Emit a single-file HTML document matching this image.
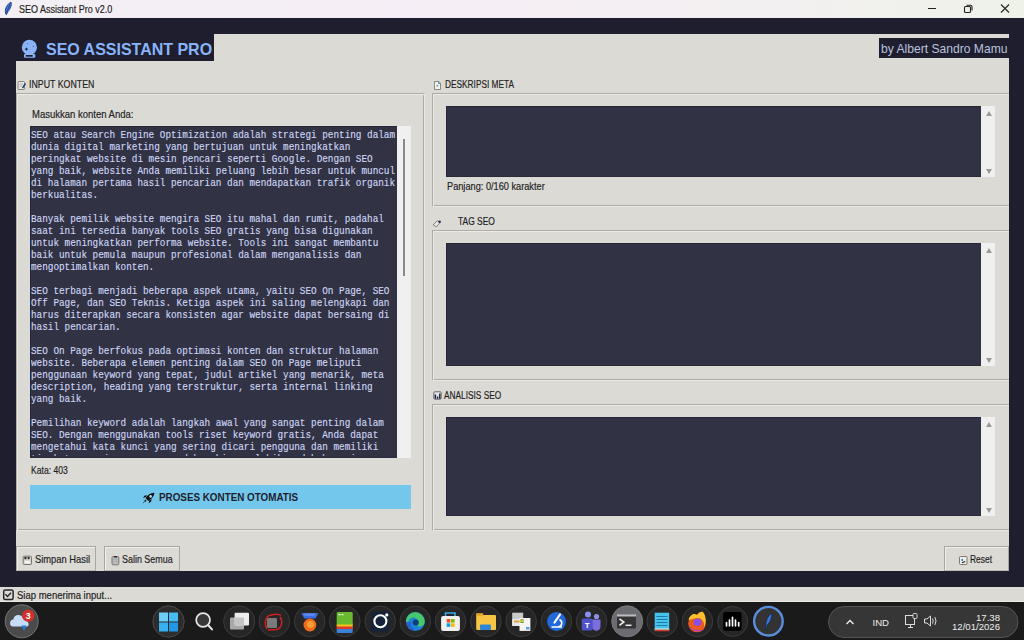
<!DOCTYPE html>
<html><head><meta charset="utf-8">
<style>
*{margin:0;padding:0;box-sizing:border-box}
html,body{width:1024px;height:640px;overflow:hidden;background:#1e1e2e;font-family:"Liberation Sans",sans-serif}
.a{position:absolute}
.t{position:absolute;white-space:pre;line-height:1;color:#1f1f1f;-webkit-text-stroke:0.18px currentColor;transform-origin:0 0}
#titlebar{left:0;top:0;width:1024px;height:18px;background:linear-gradient(90deg,#f3eff4 0%,#f6eef6 40%,#f3f0f1 75%,#eef2e8 100%)}
#main{left:16px;top:34px;width:993px;height:537px;background:#dcdad5}
.lf{position:absolute;border:1px solid #b0aca4;border-right-color:#eae9e5;border-bottom-color:#eae9e5;border-radius:1px;box-shadow:inset 1px 1px 0 #eceae6,inset -1px -1px 0 #b0aca4}
.dark{position:absolute;background:#313244;border-top:1px solid #262636;border-left:1px solid #262636;border-bottom:1px solid #2a2a3a}
.sb{position:absolute;background:#f0f0f0}
.arr{position:absolute;width:0;height:0;border-left:3.5px solid transparent;border-right:3.5px solid transparent}
.btn{position:absolute;background:#dcdad5;border:1px solid #aaa69e;border-bottom-color:#bdb9b1;box-shadow:inset 1px 1px 0 #f1f0ec}
#status{left:0;top:587px;width:1024px;height:15px;background:#dcdad5;border-bottom:1px solid #e9e8e4}
#taskbar{left:0;top:602px;width:1024px;height:38px;background:#1a1a1a}
.ic{position:absolute;width:31px;height:31px;border-radius:50%;background:#2a2a2a;border:1px solid #3c3c3c}
pre.code{position:absolute;font-family:"Liberation Mono",monospace;font-size:10px;line-height:12px;color:#cdd6f4;white-space:pre;transform:scaleX(0.9333);transform-origin:0 0;-webkit-text-stroke:0.15px currentColor}
</style></head><body>
<!-- title bar -->
<div id="titlebar" class="a"></div>
<svg class="a" style="left:0;top:0" width="18" height="18" viewBox="0 0 18 18"><path d="M10.9 2 C12.2 4.6 10.4 9 7.6 12 L6.3 14.8 L5.6 13.2 C4.6 10 6.2 5 10.9 2Z" fill="#3d7be0" stroke="#1b2d66" stroke-width="0.8"/><path d="M10 4.5 L6.5 12.5" stroke="#1b2d66" stroke-width="0.7"/></svg>
<div class="t" style="left:19.24px;top:5.00px;font-size:10.4px;transform:scaleX(0.8631);color:#222">SEO Assistant Pro v2.0</div>
<svg class="a" style="left:926px;top:2px" width="12" height="12"><line x1="2" y1="6.5" x2="10" y2="6.5" stroke="#222" stroke-width="1"/></svg>
<svg class="a" style="left:962px;top:2px" width="12" height="12"><rect x="2.5" y="4.5" width="6" height="6" rx="1" fill="none" stroke="#222" stroke-width="1.1"/><path d="M4.5 3.2 H8.5 A1.5 1.5 0 0 1 10 4.7 V8.5" fill="none" stroke="#222" stroke-width="1.1"/></svg>
<svg class="a" style="left:999px;top:2px" width="12" height="12"><path d="M2 2.5 L10 10.5 M10 2.5 L2 10.5" stroke="#222" stroke-width="1.1"/></svg>

<!-- main -->
<div id="main" class="a"></div>
<div class="a" style="left:16px;top:34px;width:198px;height:27px;background:#1e1e2e"></div>
<svg class="a" style="left:18px;top:36px" width="24" height="24" viewBox="0 0 24 24"><circle cx="11.4" cy="11.4" r="7.6" fill="#89b4fa"/><rect x="6" y="18" width="11.3" height="3.8" rx="1" fill="#89b4fa"/><rect x="7.7" y="19" width="7" height="1.7" fill="#1e1e2e"/><path d="M8.4 11.2 L9 12.5 L10.3 13.1 L9 13.7 L8.4 15 L7.8 13.7 L6.5 13.1 L7.8 12.5Z" fill="#1e1e2e"/><circle cx="9.5" cy="7.5" r="0.6" fill="#5a6a9a"/><circle cx="15.4" cy="10.5" r="0.7" fill="#5a6a9a"/></svg>
<div class="t" style="left:46.45px;top:41.00px;font-size:16.4px;transform:scaleX(0.9753);font-weight:bold;color:#89b4fa;-webkit-text-stroke:0">SEO ASSISTANT PRO</div>
<div class="a" style="left:879px;top:38px;width:130px;height:20px;background:#1e1e2e"></div>
<div class="t" style="left:880.69px;top:43.00px;font-size:12.6px;transform:scaleX(0.9611);color:#bac2de;-webkit-text-stroke:0">by Albert Sandro Mamu</div>

<!-- left labelframe -->
<svg class="a" style="left:17px;top:80px" width="10" height="11" viewBox="0 0 10 11"><rect x="1" y="1.5" width="6.5" height="8" rx="1" fill="#e9e7e3" stroke="#8c8078" stroke-width="1"/><path d="M2.5 4 H6 M2.5 6 H5" stroke="#9aa8b8" stroke-width="0.8"/><path d="M8.5 3.5 L5.5 8" stroke="#23406a" stroke-width="1.4"/></svg>
<div class="t" style="left:28.75px;top:80.00px;font-size:10.4px;transform:scaleX(0.8477)">INPUT KONTEN</div>
<div class="lf" style="left:16px;top:93px;width:409px;height:438px"></div>
<div class="t" style="left:32.11px;top:110.00px;font-size:10.4px;transform:scaleX(0.9146)">Masukkan konten Anda:</div>
<div class="dark" style="left:30px;top:126px;width:367px;height:332px;overflow:hidden;border-bottom:2px solid #2e2e40">
<pre class="code" style="left:0px;top:2.5px">SEO atau Search Engine Optimization adalah strategi penting dalam
dunia digital marketing yang bertujuan untuk meningkatkan
peringkat website di mesin pencari seperti Google. Dengan SEO
yang baik, website Anda memiliki peluang lebih besar untuk muncul
di halaman pertama hasil pencarian dan mendapatkan trafik organik
berkualitas.

Banyak pemilik website mengira SEO itu mahal dan rumit, padahal
saat ini tersedia banyak tools SEO gratis yang bisa digunakan
untuk meningkatkan performa website. Tools ini sangat membantu
baik untuk pemula maupun profesional dalam menganalisis dan
mengoptimalkan konten.

SEO terbagi menjadi beberapa aspek utama, yaitu SEO On Page, SEO
Off Page, dan SEO Teknis. Ketiga aspek ini saling melengkapi dan
harus diterapkan secara konsisten agar website dapat bersaing di
hasil pencarian.

SEO On Page berfokus pada optimasi konten dan struktur halaman
website. Beberapa elemen penting dalam SEO On Page meliputi
penggunaan keyword yang tepat, judul artikel yang menarik, meta
description, heading yang terstruktur, serta internal linking
yang baik.

Pemilihan keyword adalah langkah awal yang sangat penting dalam
SEO. Dengan menggunakan tools riset keyword gratis, Anda dapat
mengetahui kata kunci yang sering dicari pengguna dan memiliki
tingkat persaingan yang rendah sehingga lebih mudah bersaing.</pre>
</div>
<div class="sb" style="left:397px;top:126px;width:14px;height:332px"></div>
<div class="a" style="left:403px;top:139px;width:2px;height:137px;background:#8a8a8a"></div>
<div class="t" style="left:31.45px;top:466.00px;font-size:10.4px;transform:scaleX(0.8282)">Kata: 403</div>
<div class="a" style="left:30px;top:485px;width:381px;height:24px;background:#74c7ec"></div>
<svg class="a" style="left:142px;top:491.5px" width="13" height="12" viewBox="0 0 13 12"><path d="M12.4 0.8 C9 0.6 5.5 3 3.6 6.2 L6.4 8.9 C9.6 7.2 12.2 4 12.4 0.8Z" fill="#111"/><circle cx="8.6" cy="4.4" r="1.3" fill="#b8e4f6"/><path d="M3.6 5.3 L1 6 L2.6 3.6 L5.4 3.4Z M7.2 8.6 L6.6 11.3 L9.2 9.6 L9.6 7Z" fill="#111"/><path d="M3.2 7.6 L0.5 11.4 L4.6 9Z" fill="#111"/><circle cx="2.2" cy="10" r="0.8" fill="#74c7ec"/></svg>
<div class="t" style="left:159.45px;top:492.00px;font-size:11.2px;transform:scaleX(0.8798);font-weight:bold;color:#1e1e2e;-webkit-text-stroke:0">PROSES KONTEN OTOMATIS</div>

<!-- right labelframes -->
<svg class="a" style="left:433px;top:80px" width="9" height="11" viewBox="0 0 9 11"><path d="M1.5 1.5 H5.8 L7.5 3.2 V9.5 H1.5Z" fill="#f2f2f0" stroke="#8c8882" stroke-width="1"/><path d="M5.5 1.5 V3.5 H7.5" fill="none" stroke="#5a7fa8" stroke-width="0.9"/><circle cx="4.3" cy="5.8" r="1" fill="#8a98b0"/></svg>
<div class="t" style="left:444.87px;top:80.00px;font-size:10.4px;transform:scaleX(0.7986)">DESKRIPSI META</div>
<div class="lf" style="left:432px;top:93px;width:600px;height:114px"></div>
<div class="dark" style="left:446px;top:106px;width:535px;height:71px"></div>
<div class="sb" style="left:981px;top:106px;width:14px;height:71px"></div>
<div class="arr" style="left:985.7px;top:111px;border-bottom:5px solid #9a9a9a"></div>
<div class="arr" style="left:985.7px;top:169px;border-top:5px solid #9a9a9a"></div>
<div class="t" style="left:447.48px;top:182.00px;font-size:10.4px;transform:scaleX(0.8855)">Panjang: 0/160 karakter</div>

<svg class="a" style="left:432px;top:219px" width="11" height="9" viewBox="0 0 11 9"><path d="M1.2 6 L5.2 1.8 L8.2 3.2 L4.5 7.8 Z" fill="#eceae6" stroke="#8a8078" stroke-width="1"/><circle cx="7.6" cy="2.7" r="1.3" fill="#2a2a55"/></svg>
<div class="t" style="left:457.87px;top:217.00px;font-size:10.4px;transform:scaleX(0.8123)">TAG SEO</div>
<div class="lf" style="left:432px;top:230px;width:600px;height:151px"></div>
<div class="dark" style="left:446px;top:243px;width:535px;height:123px"></div>
<div class="sb" style="left:981px;top:243px;width:14px;height:123px"></div>
<div class="arr" style="left:985.7px;top:248px;border-bottom:5px solid #9a9a9a"></div>
<div class="arr" style="left:985.7px;top:358px;border-top:5px solid #9a9a9a"></div>

<svg class="a" style="left:433px;top:391px" width="9" height="9" viewBox="0 0 9 9"><rect x="0.8" y="0.8" width="7.4" height="7.4" rx="1" fill="#e8e8e8" stroke="#6a6670" stroke-width="1"/><path d="M2.4 7.8 V3.6 M4.6 7.8 V5.4 M6.8 7.8 V2.4" stroke="#1f2540" stroke-width="1.5"/></svg>
<div class="t" style="left:444.48px;top:391.00px;font-size:10.4px;transform:scaleX(0.7991)">ANALISIS SEO</div>
<div class="lf" style="left:432px;top:404px;width:600px;height:127px"></div>
<div class="dark" style="left:446px;top:417px;width:535px;height:99px"></div>
<div class="sb" style="left:981px;top:417px;width:14px;height:99px"></div>
<div class="arr" style="left:985.7px;top:422px;border-bottom:5px solid #9a9a9a"></div>
<div class="arr" style="left:985.7px;top:508px;border-top:5px solid #9a9a9a"></div>

<!-- bottom buttons -->
<div class="btn" style="left:16px;top:546px;width:80px;height:25px"></div>
<svg class="a" style="left:22px;top:555px" width="11" height="11" viewBox="0 0 11 11"><rect x="1.2" y="1.2" width="8.3" height="8.3" rx="1" fill="#d8d6d2" stroke="#77736d" stroke-width="1"/><rect x="2.4" y="2" width="2" height="2.2" fill="#222"/><rect x="5.6" y="2" width="2" height="2.2" fill="#3a2a22"/><rect x="3" y="6" width="4.8" height="2.4" fill="#f7f7f5"/></svg>
<div class="t" style="left:34.66px;top:555.00px;font-size:10.4px;transform:scaleX(0.9002)">Simpan Hasil</div>
<div class="btn" style="left:104px;top:546px;width:76px;height:25px"></div>
<svg class="a" style="left:111px;top:555px" width="10" height="11" viewBox="0 0 10 11"><rect x="1" y="1.5" width="6.8" height="8.3" rx="1" fill="#bdbbb8" stroke="#7b7670" stroke-width="1"/><rect x="3" y="1" width="3" height="1.6" fill="#3a3040"/><path d="M2.5 4.5 H6.5 M2.5 6.5 H6.5" stroke="#8fb0c8" stroke-width="0.8"/></svg>
<div class="t" style="left:122.45px;top:555.00px;font-size:10.4px;transform:scaleX(0.8592)">Salin Semua</div>
<div class="btn" style="left:944px;top:546px;width:65px;height:25px"></div>
<svg class="a" style="left:958px;top:555px" width="11" height="11" viewBox="0 0 11 11"><rect x="1.5" y="1.5" width="7.5" height="8" rx="1" fill="#eeeeec" stroke="#7d7872" stroke-width="1"/><circle cx="4.2" cy="5" r="1" fill="#2b6fa8"/><path d="M4 7.8 L7.2 6.5" stroke="#222" stroke-width="1.2"/></svg>
<div class="t" style="left:970.24px;top:555.00px;font-size:10.4px;transform:scaleX(0.8119)">Reset</div>

<div class="a" style="left:1009px;top:18px;width:15px;height:569px;background:#1e1e2e"></div>
<!-- status bar -->
<div id="status" class="a"></div>
<svg class="a" style="left:0;top:586px" width="16" height="16" viewBox="0 0 16 16"><rect x="3.7" y="3.9" width="9.4" height="9.6" rx="1.6" fill="none" stroke="#26262c" stroke-width="1.5"/><path d="M5.4 8.3 L7.5 10.4 L11 6.8" fill="none" stroke="#26262c" stroke-width="1.4"/></svg>
<div class="t" style="left:17.21px;top:591.00px;font-size:10.4px;transform:scaleX(0.9155)">Siap menerima input...</div>

<!-- taskbar -->
<svg class="a" style="left:0;top:602px" width="1024" height="38" viewBox="0 0 1024 38" font-family="Liberation Sans">
<rect width="1024" height="38" fill="#1a1a1a"/>
<!-- weather -->
<circle cx="21.7" cy="19.3" r="16.5" fill="#4b4b4b" stroke="#747474" stroke-width="1"/>
<path d="M12.5 24.5 a3.6 3.6 0 0 1 0.8 -7 a5.2 5.2 0 0 1 9.8 -1.6 a3.9 3.9 0 0 1 4.8 4.6 a2.4 2.4 0 0 1 -0.6 4Z" fill="#c7ddf7"/>
<path d="M21.5 23.5 L26.5 23.5 L24 29Z" fill="#2a7ae2"/>
<circle cx="28.2" cy="13.7" r="6.2" fill="#d0312d"/>
<text x="28.3" y="17" font-size="8.8" font-weight="bold" fill="#fff" text-anchor="middle">3</text>
<!-- generic circles -->
<g fill="#262626" stroke="#3b3b3b" stroke-width="1">
<circle cx="168.5" cy="19.5" r="15.6"/>
<circle cx="239.2" cy="19.5" r="15.6"/>
<circle cx="274.3" cy="19.4" r="15.3"/>
<circle cx="309.6" cy="19.4" r="15.3"/>
<circle cx="344.8" cy="19.4" r="15.3"/>
<circle cx="380.2" cy="19.4" r="15.3"/>
<circle cx="415.3" cy="19.4" r="15.3"/>
<circle cx="450.6" cy="19.4" r="15.3"/>
<circle cx="485.9" cy="19.4" r="15.3"/>
<circle cx="521.2" cy="19.4" r="15.3"/>
<circle cx="556.4" cy="19.4" r="15.3"/>
<circle cx="591.6" cy="19.4" r="15.3"/>
<circle cx="662.2" cy="19.4" r="15.3"/>
<circle cx="697.4" cy="19.4" r="15.3"/>
<circle cx="732.7" cy="19.5" r="15"/>
</g>
<circle cx="168.5" cy="19.5" r="15.6" fill="#2c2c2c" stroke="#474747" stroke-width="1"/>
<circle cx="627.2" cy="19.3" r="15.5" fill="#6b6b72" stroke="#7a7a80" stroke-width="1"/>
<circle cx="768.4" cy="19.2" r="14.3" fill="#333" stroke="#5a8ddc" stroke-width="2.4"/>
<!-- start -->
<g transform="translate(159,10.5)">
<rect x="0" y="0" width="9" height="9" fill="#6ccdf7"/><rect x="10" y="0" width="9" height="9" fill="#45bcf2"/>
<rect x="0" y="10" width="9" height="9" fill="#36b0ee"/><rect x="10" y="10" width="9" height="9" fill="#2197e6"/>
</g>
<!-- search -->
<circle cx="203.1" cy="18" r="6.9" fill="#383838" stroke="#e8e8e8" stroke-width="1.7"/>
<path d="M208 23 L212 27.4" stroke="#e8e8e8" stroke-width="2" stroke-linecap="round"/>
<!-- task view -->
<rect x="230" y="15.5" width="14" height="12" rx="1" fill="#a8a8a8"/>
<rect x="234.6" y="10.8" width="14.4" height="12.7" rx="1" fill="#ececec"/>
<rect x="234.6" y="15.5" width="9.4" height="8" fill="#c4c4c4"/>
<!-- red app -->
<rect x="267" y="16" width="10" height="10" rx="1" fill="#7a7a7a"/>
<path d="M267 27 C264 22 265 14 271 13 C275 12 279 11.5 281 13.5 M280 15 C283 19 282 26 277 27.5 L268 28" fill="none" stroke="#d42020" stroke-width="1.5"/>
<!-- medal -->
<path d="M301.3 11.2 H318.4 L315.5 16.6 H304.2Z" fill="#3d6ae0"/>
<path d="M303 11.2 H316 L314 14 H305Z" fill="#5a86f0"/>
<circle cx="309.9" cy="23" r="6.4" fill="#f06a1e"/><circle cx="310.5" cy="22.5" r="3.5" fill="#f5a030"/>
<!-- book -->
<rect x="336.7" y="24.5" width="16" height="6.4" rx="1" fill="#3b82d6"/>
<rect x="336.7" y="23.5" width="16" height="3.5" fill="#dc3a26"/>
<rect x="336.7" y="21.5" width="16" height="3" fill="#f2c21e"/>
<rect x="336.7" y="10.1" width="16" height="12.5" rx="1" fill="#6ab82e"/>
<rect x="338.5" y="12" width="2" height="1.2" fill="#dfe"/><rect x="341.5" y="12" width="2" height="1.2" fill="#dfe"/>
<!-- camera -->
<rect x="370.7" y="9.6" width="18.8" height="19.9" rx="2" fill="#142338"/>
<circle cx="380.4" cy="19.3" r="6" fill="none" stroke="#fff" stroke-width="2.1"/>
<circle cx="386.8" cy="12.9" r="1.6" fill="#fff"/>
<!-- edge -->
<circle cx="415.3" cy="19.5" r="9.5" fill="#1c83d6"/>
<path d="M405.9 18.5 A9.5 9.5 0 0 1 424.8 19.5 C424.5 24 419.5 26 417 23.5 C420 20 417 14.5 412 15.8 C409 16.8 407.5 19.5 408.5 23Z" fill="#47c86a"/>
<path d="M406 20 C407 26 412 29 417 28.8 C412 27 410 23 411.5 20Z" fill="#2a5fd0"/>
<circle cx="415.8" cy="20.5" r="3" fill="#0d3f7a"/>
<!-- store -->
<rect x="441.1" y="13.9" width="18.8" height="15" rx="2" fill="#f0f0f0"/>
<path d="M445.5 14 V11 H455 V14" fill="none" stroke="#3aa8f0" stroke-width="1.6"/>
<rect x="446.7" y="17" width="3.6" height="3.6" fill="#f25022"/><rect x="451" y="17" width="3.6" height="3.6" fill="#7fba00"/>
<rect x="446.7" y="21.3" width="3.6" height="3.6" fill="#00a4ef"/><rect x="451" y="21.3" width="3.6" height="3.6" fill="#ffb900"/>
<!-- explorer -->
<rect x="476.2" y="13" width="19.8" height="14.9" rx="1" fill="#f7c443"/>
<rect x="476.2" y="11.2" width="7" height="3" fill="#e9a72a"/>
<rect x="480" y="22.5" width="11" height="5.4" rx="1" fill="#2f86d8"/>
<!-- printer -->
<rect x="512.2" y="10.7" width="11" height="13" fill="#c9c9c9"/>
<rect x="512.2" y="17" width="11" height="7" fill="#e8e8e8"/>
<rect x="514" y="18.5" width="6" height="2" fill="#e0a040"/>
<rect x="519.5" y="16" width="10.9" height="12.9" fill="#f4f4f4"/>
<rect x="520.5" y="17" width="3" height="4" fill="#5aa030"/><rect x="521" y="17.5" width="2" height="2.5" fill="#e8c020"/>
<rect x="526" y="25" width="3.5" height="2.5" fill="#5aa0e0"/>
<!-- science -->
<circle cx="556.5" cy="19.5" r="9.4" fill="#2168d8"/>
<path d="M560 12.5 L554.5 20.5" stroke="#fff" stroke-width="2.2" stroke-linecap="round"/>
<path d="M551.5 25 H562 M559.5 17.5 C563 19.5 562.5 24 558 25" fill="none" stroke="#fff" stroke-width="1.5"/>
<!-- teams -->
<circle cx="588" cy="12.5" r="3" fill="#8a90f0"/><circle cx="596.5" cy="14.5" r="2.6" fill="#8a90f0"/>
<path d="M592 17.5 H600.5 V24 A4 4 0 0 1 592 25Z" fill="#7b6fe0"/>
<rect x="581.7" y="16.5" width="11" height="12" rx="1.5" fill="#4f52c8"/>
<text x="587.2" y="26.3" font-size="8" font-weight="bold" fill="#fff" text-anchor="middle">T</text>
<!-- terminal -->
<rect x="617" y="12.3" width="19" height="14.1" rx="1" fill="#353535"/>
<rect x="617" y="12.3" width="19" height="2.2" fill="#bdbdbd"/>
<path d="M619.5 16.8 L623.8 20 L619.5 23.3" fill="none" stroke="#eee" stroke-width="1.6"/>
<path d="M625.5 23.3 H631.5" stroke="#eee" stroke-width="1.5"/>
<!-- notepad -->
<rect x="654.7" y="10.7" width="14.5" height="18" fill="#45c4ec"/>
<path d="M656.5 14.5 H667.5 M656.5 17.5 H667.5 M656.5 20.5 H667.5 M656.5 23.5 H667.5" stroke="#1d6ea0" stroke-width="0.9"/>
<rect x="654.7" y="26.5" width="14.5" height="1.2" fill="#f0e0d0"/>
<rect x="654.7" y="27.7" width="14.5" height="1.6" fill="#c83a2a"/>
<!-- firefox -->
<circle cx="697" cy="21.5" r="8.8" fill="#ea5a1e"/>
<path d="M688.5 18 C690 12 695 11 697 13 C699 9.5 702 9.5 703 10 C706 14 707 20 704 25 C705 19 701 15.5 697 16Z" fill="#ffbf2a"/>
<circle cx="697.5" cy="20.2" r="3.8" fill="#8a4ee8"/>
<path d="M689 24 C691 29 699 31 704 27.5 C698 29 692 28 689 24Z" fill="#b03ad0"/>
<!-- audio -->
<rect x="723.2" y="10" width="18.4" height="18.8" rx="2" fill="#000"/>
<path d="M726.5 20.5 V23.8 M729.5 18 V23.8 M732.5 15.3 V23.8 M735.5 18 V23.8 M738.7 20.5 V23.8" stroke="#fff" stroke-width="1.7" stroke-linecap="round"/>
<!-- feather -->
<path d="M772 11 C769 12.5 766.5 17 766 21.5 L765.5 27.5 L766.4 27.6 L767.3 23 C770 20.5 772 16 772 11Z" fill="#3a76d6" stroke="#14254a" stroke-width="0.8"/>
<!-- tray -->
<rect x="828.5" y="4.5" width="189.5" height="31" rx="15.5" fill="#363636" stroke="#555" stroke-width="1"/>
<path d="M846.5 22 L850 18.5 L853.5 22" fill="none" stroke="#eee" stroke-width="1.3"/>
<text x="872.5" y="24.2" font-size="9.6" fill="#eee">IND</text>
<rect x="905.5" y="13.5" width="9" height="9" fill="none" stroke="#ddd" stroke-width="1"/>
<path d="M908 25.5 H913 M910.5 22.5 V25.5" stroke="#ddd"/>
<rect x="913" y="11.5" width="4" height="5" rx="1" fill="#363636" stroke="#ddd" stroke-width="0.9"/>
<path d="M924.5 17 H927 L930.5 14 V24 L927 21 H924.5Z" fill="none" stroke="#ddd" stroke-width="1"/>
<path d="M932.5 16.5 Q934 19 932.5 21.5 M934.8 15 Q937.3 19 934.8 23" fill="none" stroke="#ddd" stroke-width="1"/>
<text x="1000" y="19" font-size="9.6" fill="#eee" text-anchor="end">17.38</text>
<text x="1000" y="28" font-size="9.6" fill="#eee" text-anchor="end">12/01/2026</text>
</svg>

</body></html>
